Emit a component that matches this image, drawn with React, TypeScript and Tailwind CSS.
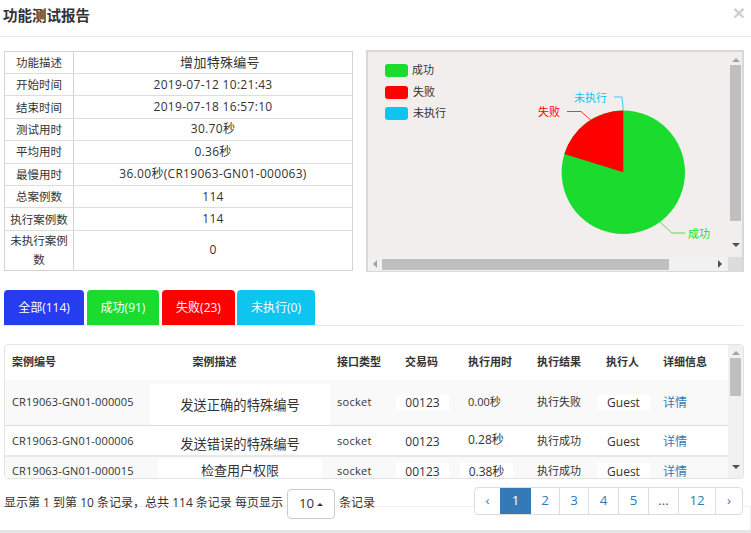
import React from "react";

const font = "font-['Open_Sans','Noto_Sans_CJK_SC',sans-serif]";
const cols = "grid grid-cols-[145px_180px_66px_64px_69px_69px_57px_73px]";

const info: [string, string, string][] = [
  ["功能描述", "增加特殊编号", "h-[21px]"],
  ["开始时间", "2019-07-12 10:21:43", "h-[22.4px]"],
  ["结束时间", "2019-07-18 16:57:10", "h-[22.4px]"],
  ["测试用时", "30.70秒", "h-[22.4px]"],
  ["平均用时", "0.36秒", "h-[22.4px]"],
  ["最慢用时", "36.00秒(CR19063-GN01-000063)", "h-[22.4px]"],
  ["总案例数", "114", "h-[22.4px]"],
  ["执行案例数", "114", "h-[22.4px]"],
  ["未执行案例数", "0", "h-[40px]"],
];

function Chart() {
  return (
    <svg width="361" height="205" viewBox="0 0 361 205" className="block">
      <rect x="17" y="12" width="23" height="13" rx="3" fill="#1adb2e" />
      <rect x="17" y="34" width="23" height="13" rx="3" fill="#ff0000" />
      <rect x="17" y="55" width="23" height="13" rx="3" fill="#0dc5ef" />
      <g fontSize="11" fill="#333" fontFamily="'Noto Sans CJK SC',sans-serif">
        <text x="44" y="22">成功</text>
        <text x="45" y="44">失败</text>
        <text x="45" y="65">未执行</text>
      </g>
      <circle cx="255.3" cy="120.3" r="61.7" fill="#1adb2e" />
      <path d="M255.3 120.3 L255.3 58.6 A61.7 61.7 0 0 0 196.4 101.9 Z" fill="#ff0000" />
      <path d="M292 170 L304 181 H317" fill="none" stroke="#1adb2e" strokeWidth="1" opacity="0.75" />
      <path d="M225 70 L213 59.5 H199" fill="none" stroke="#ff0000" strokeWidth="1" opacity="0.8" />
      <path d="M255.3 58.6 L254 45 H246" fill="none" stroke="#0dc5ef" strokeWidth="1" opacity="0.8" />
      <g fontSize="11" fontFamily="'Noto Sans CJK SC',sans-serif">
        <text x="320" y="186" fill="#1adb2e">成功</text>
        <text x="170" y="64" fill="#ff0000">失败</text>
        <text x="206" y="50" fill="#0dc5ef">未执行</text>
      </g>
    </svg>
  );
}

const Patch = ({ w, h, children }: { w: string; h: string; children: React.ReactNode }) => (
  <div className={`flex items-center justify-center bg-white ${w} ${h}`}>{children}</div>
);

function Link() {
  return <span className="pl-[8px] text-[12px] text-[#337ab7]">详情</span>;
}

const heads = ["接口类型", "交易码", "执行用时", "执行结果", "执行人", "详细信息"];

export default function App() {
  return (
    <div className={`relative flex h-[533px] w-[751px] flex-col overflow-hidden bg-white text-[12px] text-[#333] ${font}`}>
      <div className="flex h-[37px] shrink-0 items-center justify-between border-b border-[#e8e8e8] pl-[3px] pr-[6px]">
        <h4 className="pb-[5px] text-[14.5px] leading-none font-bold text-[#333] font-['Noto_Sans_CJK_SC',sans-serif]">功能测试报告</h4>
        <span className="pb-[12px] text-[21px] leading-none font-bold text-[#cfcfcf] font-['Liberation_Sans',sans-serif]">×</span>
      </div>

      <div className="mt-[13px] flex h-[222px] shrink-0 items-start pl-[4px]">
        <div className="mt-[1px] flex w-[349px] flex-col border border-[#d4d4d4]">
          {info.map(([k, v, c], i) => (
            <div key={k} className={`flex ${c} ${i ? "border-t border-[#dddddd]" : ""}`}>
              <div className="flex w-[69px] shrink-0 items-center justify-center border-r border-[#d4d4d4] px-[3px] text-center text-[11.5px] leading-[19px]">{k}</div>
              <div className={`flex flex-1 items-center justify-center tracking-[0.3px] ${i === 0 ? "pl-[14px] text-[13px]" : ""}`}>{v}</div>
            </div>
          ))}
        </div>
        <div className="ml-[13px] flex h-[222px] w-[378px] flex-col border-2 border-[#d8d8d8] bg-[#f2eeee]">
          <div className="flex flex-1">
            <div className="flex-1"><Chart /></div>
            <div className="flex w-[15px] flex-col items-center bg-[#f2eeee]">
              <span className="mt-[6px] h-0 w-0 border-x-[4px] border-b-[4px] border-x-transparent border-b-[#a3a3a3]" />
              <div className="mt-[3px] h-[156px] w-[11px] bg-[#bfbfbf]" />
              <span className="mt-[22px] h-0 w-0 border-x-[4px] border-t-[4px] border-x-transparent border-t-[#505050]" />
            </div>
          </div>
          <div className="flex h-[14px] shrink-0 items-center">
            <div className="flex h-full w-[360px] shrink-0 items-center bg-[#f1f1f1]">
              <span className="ml-[5px] h-0 w-0 shrink-0 border-y-[4px] border-r-[4px] border-y-transparent border-r-[#a3a3a3]" />
              <div className="ml-[5px] h-[11px] w-[287px] shrink-0 bg-[#bfbfbf]" />
              <span className="ml-[49px] h-0 w-0 shrink-0 border-y-[4px] border-l-[4px] border-y-transparent border-l-[#505050]" />
            </div>
            <div className="h-full flex-1 bg-[#dcdcdc]" />
          </div>
        </div>
      </div>

      <div className="mt-[18px] ml-[4px] flex h-[36px] w-[739px] shrink-0 items-stretch gap-[3px] border-b border-[#e8e8e8] text-white">
        <div className="flex w-[80px] items-center justify-center rounded-t-[4px] bg-[#263cf0]">全部(114)</div>
        <div className="flex w-[72px] items-center justify-center rounded-t-[4px] bg-[#1adb2e]">成功(91)</div>
        <div className="flex w-[73px] items-center justify-center rounded-t-[4px] bg-[#ff0000]">失败(23)</div>
        <div className="-ml-[1px] flex w-[78px] items-center justify-center rounded-t-[4px] bg-[#0dc5ef]">未执行(0)</div>
      </div>

      <div className="mt-[18px] ml-[4px] flex h-[135px] w-[740px] shrink-0 overflow-hidden rounded-[4px] border border-[#e3e3e3]">
        <div className="flex w-[723px] flex-col">
          <div className={`${cols} h-[35px] shrink-0 items-center text-[11px] font-bold`}>
            <span className="pl-[7px]">案例编号</span>
            <span className="pr-[51px] text-center">案例描述</span>
            {heads.map((h, i) => (
              <span key={h} className={["pl-[7px]", "pl-[9px]", "pl-[8px]", "pl-[8px]", "pl-[8px]", "pl-[8px]"][i]}>{h}</span>
            ))}
          </div>
          <div className={`${cols} h-[46px] shrink-0 items-center border-b border-[#dddddd] bg-[#f9f9f9]`}>
            <span className="pl-[7px] text-[11px] tracking-[0.15px]">CR19063-GN01-000005</span>
            <div className="flex h-[41px] items-center justify-center self-end bg-white pt-[3px] text-[13.3px]">发送正确的特殊编号</div>
            <span className="pl-[7px] text-[11px] tracking-[0.3px]">socket</span>
            <Patch w="w-[53px]" h="h-[15px]"><span className="text-[12px]">00123</span></Patch>
            <span className="pl-[8px] text-[11px]">0.00秒</span>
            <span className="pl-[8px] text-[11px]">执行失败</span>
            <Patch w="w-[53px] -ml-[1px]" h="h-[15px]"><span className="text-[12px]">Guest</span></Patch>
            <Link />
          </div>
          <div className={`${cols} h-[31px] shrink-0 items-center border-b-2 border-[#e8e8e8] pt-[2px]`}>
            <span className="pl-[7px] text-[11px] tracking-[0.15px]">CR19063-GN01-000006</span>
            <span className="pt-[6px] text-center text-[13.3px]">发送错误的特殊编号</span>
            <span className="pl-[7px] text-[11px] tracking-[0.3px]">socket</span>
            <span className="w-[53px] text-center text-[12px]">00123</span>
            <span className="pb-[4px] pl-[8px] text-[12px]">0.28秒</span>
            <span className="pl-[8px] text-[11px]">执行成功</span>
            <span className="-ml-[1px] w-[53px] text-center text-[12px]">Guest</span>
            <Link />
          </div>
          <div className={`${cols} h-[29px] shrink-0 items-center bg-[#f9f9f9]`}>
            <span className="pl-[7px] text-[11px] tracking-[0.15px]">CR19063-GN01-000015</span>
            <div className="mx-[8px] flex h-[27px] items-start justify-center self-end bg-white pt-[4px] text-[13px] leading-[14px]">检查用户权限</div>
            <span className="pl-[7px] text-[11px] tracking-[0.3px]">socket</span>
            <Patch w="w-[53px]" h="h-[18px]"><span className="text-[12px]">00123</span></Patch>
            <Patch w="w-[53px]" h="h-[18px]"><span className="text-[12px]">0.38秒</span></Patch>
            <span className="pl-[8px] text-[11px]">执行成功</span>
            <Patch w="w-[53px] -ml-[1px]" h="h-[18px]"><span className="text-[12px]">Guest</span></Patch>
            <Link />
          </div>
        </div>
        <div className="flex flex-1 flex-col items-center bg-[#f1f1f1]">
          <span className="mt-[6px] h-0 w-0 border-x-[4px] border-b-[4px] border-x-transparent border-b-[#a3a3a3]" />
          <div className="mt-[3px] h-[38px] w-[11px] bg-[#bfbfbf]" />
          <span className="mt-[69px] h-0 w-0 border-x-[4px] border-t-[4px] border-x-transparent border-t-[#505050]" />
        </div>
      </div>

      <div className="flex h-[28px] w-[751px] shrink-0 items-start border-b border-[#eeeeee] pl-[4px] text-[12px]">
        <span className="mt-[16px] w-[283px] whitespace-nowrap leading-[16px]">显示第 1 到第 10 条记录，总共 114 条记录 每页显示</span>
        <div className="mt-[10px] flex h-[30px] w-[48px] shrink-0 items-center justify-center gap-[3px] rounded-[4px] border border-[#cccccc] bg-white text-[13.3px]">
          10
          <span className="h-0 w-0 border-x-[3px] border-b-[3px] border-x-transparent border-b-[#333]" />
        </div>
        <span className="mt-[16px] ml-[4px] leading-[16px]">条记录</span>
        <div className="mt-[8px] ml-[99px] flex h-[28px] w-[269px] shrink-0 overflow-hidden rounded-[4px] border border-[#dddddd] bg-white text-[13.3px] text-[#337ab7]">
          <span className="flex w-[25px] items-center justify-center">‹</span>
          <span className="flex w-[31px] items-center justify-center bg-[#337ab7] text-white">1</span>
          <span className="flex w-[29px] items-center justify-center border-r border-[#dddddd]">2</span>
          <span className="flex w-[29px] items-center justify-center border-r border-[#dddddd]">3</span>
          <span className="flex w-[30px] items-center justify-center border-r border-[#dddddd]">4</span>
          <span className="flex w-[30px] items-center justify-center border-r border-[#dddddd]">5</span>
          <span className="flex w-[30px] items-center justify-center border-r border-[#dddddd] text-[#555]">...</span>
          <span className="flex w-[37px] items-center justify-center border-r border-[#dddddd]">12</span>
          <span className="flex flex-1 items-center justify-center">›</span>
        </div>
      </div>

      <div className="flex-1 border-r border-[#eeeeee]" />
      <div className="h-[3px] shrink-0 bg-[#e6e6e6]" />
    </div>
  );
}
